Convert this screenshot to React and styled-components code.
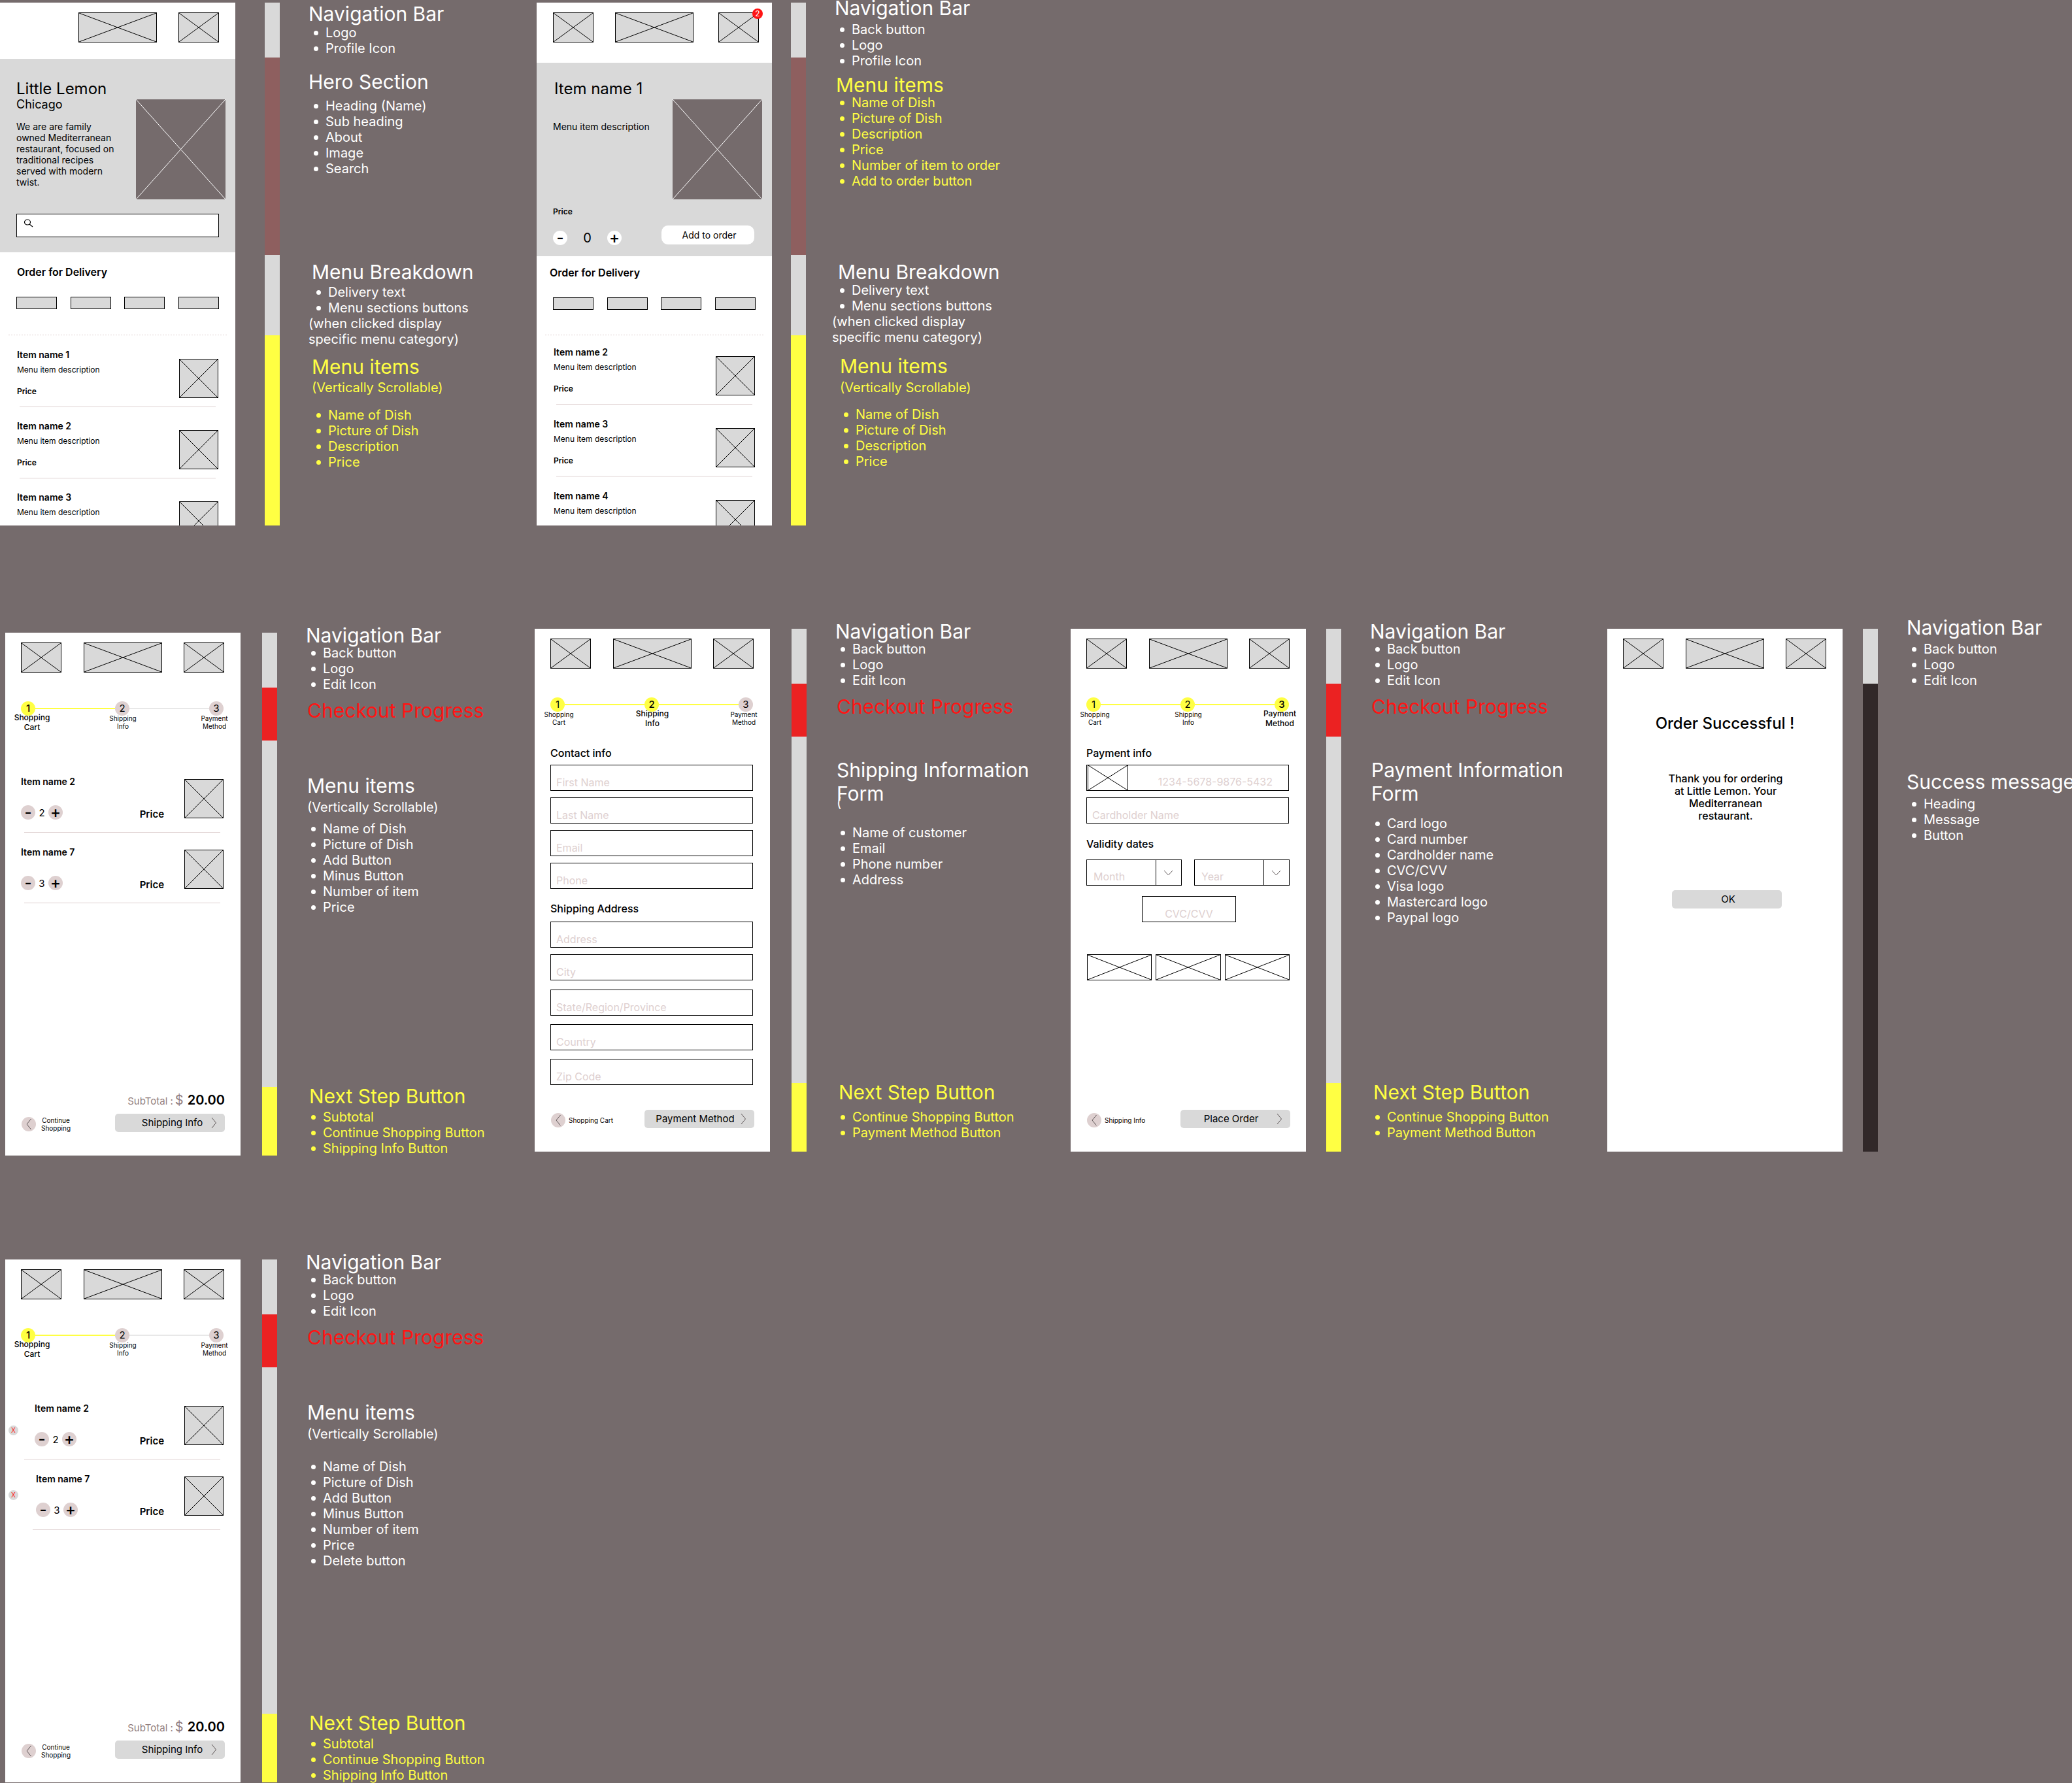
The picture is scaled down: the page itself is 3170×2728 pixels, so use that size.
import React from "react";
import styled, { createGlobalStyle, css } from "styled-components";

const color = {
  board: "#756b6c",
  paper: "#ffffff",
  grey: "#d9d9d9",
  ink: "#000000",
  blush: "#ded0d0",
  mauve: "#937f81",
  maroon: "#8e5f5f",
  yellow: "#ffff43",
  red: "#eb2222",
  alert: "#ff1414",
  dark: "#312829",
  track: "#e8e8e8",
};

const GlobalStyle = createGlobalStyle`
  *, *::before, *::after { box-sizing: border-box; }
  body {
    margin: 0;
    background: ${color.board};
    color: ${color.ink};
    font-family: Inter, "Liberation Sans", sans-serif;
    font-optical-sizing: none;
  }
  h1, h2, h3, p, ul, ol { margin: 0; padding: 0; font-weight: 400; }
  button, input, select { font: inherit; color: inherit; margin: 0; border-radius: 0; }
  button { cursor: pointer; }
  a { color: inherit; text-decoration: none; }
`;

/* ---------- board ---------- */

const Board = styled.main`
  display: flex;
  flex-direction: column;
  gap: 138px;
  overflow: hidden;
`;

const Row = styled.div`
  display: grid;
  grid-template-columns: ${(p) => p.$columns};
`;

const Artboard = styled.section`
  display: flex;
  align-items: flex-start;
  min-width: 0;
  padding-left: ${(p) => p.$inset || 0}px;
`;

const Screen = styled.div`
  display: flex;
  flex-direction: column;
  flex: none;
  width: 360px;
  height: 800px;
  margin-top: ${(p) => p.$top}px;
  margin-right: ${(p) => p.$gap}px;
  background: ${color.paper};
  overflow: hidden;
`;

const Strip = styled.div`
  display: flex;
  flex-direction: column;
  flex: none;
  width: 23px;
  height: 800px;
  margin-top: ${(p) => p.$top}px;
  margin-right: 40px;
`;

const Segment = styled.div`
  flex: ${(p) => p.$size} 0 0;
  background: ${(p) => p.$color};
`;

/* ---------- annotations ---------- */

const Notes = styled.div`
  display: flex;
  flex-direction: column;
  flex: none;
  width: 320px;
  color: ${color.paper};
`;

const NoteSection = styled.section`
  display: flex;
  flex-direction: column;
  margin-top: ${(p) => p.$before}px;
  color: ${(p) => p.$color};
`;

const NoteTitle = styled.h2`
  margin-left: ${(p) => p.$indent}px;
  font-size: 30px;
  line-height: 36px;
`;

const NoteText = styled.p`
  max-width: 260px;
  margin-top: ${(p) => p.$gap || 0}px;
  margin-left: ${(p) => p.$indent}px;
  font-size: 20px;
  line-height: 24px;
`;

const NoteList = styled.ul`
  margin-top: ${(p) => p.$gap}px;
  margin-left: ${(p) => p.$inset || 0}px;
  padding-left: 12px;
  font-size: 20px;
  line-height: 24px;
  list-style: none;
  white-space: nowrap;
`;

const NoteItem = styled.li`
  display: flex;
  align-items: center;

  &::before {
    content: "";
    width: 7px;
    height: 7px;
    margin-right: 11px;
    border-radius: 50%;
    background: currentColor;
  }
`;

/* ---------- shared wireframe parts ---------- */

const CrossBox = styled.div`
  flex: none;
  width: ${(p) => p.$width};
  height: ${(p) => p.$height}px;
  border: ${(p) => (p.$plain ? "0" : `1px solid ${color.ink}`)};
  background: ${(p) => p.$fill};

  svg {
    display: block;
    width: 100%;
    height: 100%;
    overflow: visible;
  }
`;

function Cross({ width = "60px", height = 60, fill = color.grey, stroke = color.ink, plain, label }) {
  return (
    <CrossBox $width={width} $height={height} $fill={fill} $plain={plain} role="img" aria-label={label}>
      <svg viewBox="0 0 100 100" preserveAspectRatio="none" stroke={stroke} strokeWidth="1">
        <path d="M0 0 100 100M100 0 0 100" vectorEffect="non-scaling-stroke" />
      </svg>
    </CrossBox>
  );
}

const TopBar = styled.header`
  display: grid;
  grid-template-columns: ${(p) => (p.$wide ? "95px 158px 62px" : "96px 153px 62px")};
  flex: none;
  height: ${(p) => p.$height}px;
  padding-top: 15px;
  padding-left: ${(p) => (p.$wide ? 25 : 24)}px;
`;

const BadgeAnchor = styled.div`
  position: relative;
`;

const Badge = styled.span`
  position: absolute;
  top: -6px;
  right: -6px;
  width: 16px;
  height: 16px;
  border-radius: 50%;
  background: ${color.alert};
  color: ${color.paper};
  font-size: 12px;
  line-height: 16px;
  text-align: center;
`;

function Bar({ height = 90, back = true, wide, badge }) {
  return (
    <TopBar $height={height} $wide={wide}>
      {back ? <Cross width="62px" height={46} label="Back" /> : <span />}
      <Cross width="120px" height={46} label="Logo" />
      <BadgeAnchor>
        <Cross width="62px" height={46} label="Profile" />
        {badge && <Badge>{badge}</Badge>}
      </BadgeAnchor>
    </TopBar>
  );
}

/* ---------- hero ---------- */

const Hero = styled.section`
  flex: none;
  height: 296px;
  padding: ${(p) => p.$top}px 15px 0 25px;
  background: ${color.grey};
`;

const HeroGrid = styled.div`
  display: grid;
  grid-template-columns: 183px 137px;
  height: 183px;
`;

const HeroPicture = styled.div`
  padding-top: 30px;
`;

const HeroTitle = styled.h1`
  margin-left: ${(p) => p.$shift || 0}px;
  font-size: 24px;
  line-height: 28px;
`;

const HeroSub = styled.h2`
  font-size: 18px;
  line-height: 20px;
`;

const HeroText = styled.p`
  max-width: 160px;
  margin-top: ${(p) => p.$gap}px;
  font-size: 14px;
  line-height: 17px;
`;

const SearchBox = styled.div`
  position: relative;
  width: 310px;
  margin-top: 22px;

  svg {
    position: absolute;
    top: 8px;
    left: 11px;
  }
`;

const SearchInput = styled.input`
  display: block;
  width: 100%;
  height: 36px;
  padding: 0 12px 0 34px;
  border: 1px solid ${color.ink};
  background: ${color.paper};
  font-size: 14px;
`;

const OrderRow = styled.div`
  display: flex;
  align-items: flex-end;
  justify-content: space-between;
  padding-right: 12px;
  margin-top: 14px;
`;

const AddButton = styled.button`
  width: 142px;
  height: 29px;
  padding: 0 0 0 4px;
  border: 0;
  border-radius: 10px;
  background: ${color.paper};
  font-size: 14px;
  line-height: 17px;
`;

const Price = styled.p`
  font-size: ${(p) => (p.$large ? 15 : 12)}px;
  line-height: ${(p) => (p.$large ? 18 : 15)}px;
  font-weight: 600;
`;

const HeroPrice = styled(Price)`
  margin-top: 11px;
`;

const Counter = styled.div`
  display: grid;
  grid-template-columns: 22px ${(p) => p.$middle}px 22px;
  align-items: center;
  height: 22px;
  font-size: ${(p) => p.$size}px;
  text-align: center;
`;

const RoundButton = styled.button`
  width: 22px;
  height: 22px;
  padding: 0;
  border: 0;
  border-radius: 50%;
  background: ${(p) => p.$fill};
  font-size: 24px;
  line-height: 22px;
  font-weight: 500;
`;

function Quantity({ value, middle = 20, size = 15, fill = color.blush }) {
  return (
    <Counter $middle={middle} $size={size}>
      <RoundButton type="button" $fill={fill} aria-label="Remove one">-</RoundButton>
      <span>{value}</span>
      <RoundButton type="button" $fill={fill} aria-label="Add one">+</RoundButton>
    </Counter>
  );
}

/* ---------- menu ---------- */

const MenuHead = styled.section`
  flex: none;
  padding: ${(p) => p.$top}px 25px ${(p) => p.$bottom}px;
`;

const MenuTitle = styled.h2`
  margin-left: ${(p) => p.$shift || 0}px;
  font-size: 16px;
  line-height: 19px;
  font-weight: 600;
`;

const Chips = styled.div`
  display: flex;
  justify-content: space-between;
  margin-top: 28px;
`;

const Chip = styled.button`
  width: 62px;
  height: 19px;
  padding: 0;
  border: 1px solid ${color.ink};
  background: ${color.grey};
`;

const DottedRule = styled.div`
  flex: none;
  height: 1px;
  margin: 0 13px;
  background: repeating-linear-gradient(90deg, ${color.blush} 0 2px, transparent 2px 4px);
`;

const MenuList = styled.ul`
  display: flex;
  flex-direction: column;
  gap: ${(p) => p.$gap}px;
  margin-top: ${(p) => p.$top}px;
  list-style: none;
`;

const MenuItem = styled.li`
  flex: none;
  height: 106px;
  padding: 17px 26px 0;
`;

const MenuGrid = styled.div`
  display: flex;
  justify-content: space-between;
  height: 88px;
`;

const MenuPicture = styled.div`
  padding-top: 15px;
`;

const ItemName = styled.h3`
  font-size: 14px;
  line-height: 17px;
  font-weight: 600;
`;

const ItemText = styled.p`
  margin: 7px 0 18px;
  font-size: 12px;
  line-height: 15px;
`;

const Rule = styled.div`
  height: 1px;
  margin: 0 ${(p) => p.$right}px 0 ${(p) => p.$left}px;
  background: ${color.blush};
`;

function Menu({ names, gap, top }) {
  const last = names.length - 1;
  return (
    <MenuList $gap={gap} $top={top}>
      {names.map((name, i) => (
        <MenuItem key={name}>
          <MenuGrid>
            <div>
              <ItemName>{name}</ItemName>
              <ItemText>Menu item description</ItemText>
              {i < last && <Price>Price</Price>}
            </div>
            <MenuPicture>
              <Cross label={name} />
            </MenuPicture>
          </MenuGrid>
          {i < last && <Rule $left={4} $right={4} />}
        </MenuItem>
      ))}
    </MenuList>
  );
}

function MenuHeader({ top, bottom, shift }) {
  return (
    <MenuHead $top={top} $bottom={bottom}>
      <MenuTitle $shift={shift}>Order for Delivery</MenuTitle>
      <Chips>
        {[1, 2, 3, 4].map((n) => (
          <Chip key={n} type="button" aria-label={`Menu section ${n}`} />
        ))}
      </Chips>
    </MenuHead>
  );
}

/* ---------- checkout progress ---------- */

const Steps = styled.ol`
  display: flex;
  flex: none;
  height: 48px;
  padding: 0 26px 0 24px;
  margin-top: 15px;
  list-style: none;
`;

const Step = styled.li`
  display: flex;
  flex-direction: column;
  align-items: center;
  flex: none;
  width: 22px;
`;

const StepMark = styled.span`
  flex: none;
  width: 22px;
  height: 22px;
  border-radius: 50%;
  background: ${(p) => (p.$done ? color.yellow : color.blush)};
  font-size: 15px;
  line-height: 22px;
  font-weight: ${(p) => (p.$current ? 500 : 400)};
  text-align: center;
`;

const StepLabel = styled.span`
  z-index: 1;
  margin-top: -2px;
  padding-left: ${(p) => p.$left}px;
  padding-right: ${(p) => p.$right}px;
  font-size: 10px;
  line-height: 12px;
  text-align: center;
  white-space: pre;

  ${(p) =>
    p.$current &&
    css`
      margin-top: -5px;
      font-size: 12px;
      line-height: 15px;
      font-weight: 500;
    `}
`;

const StepLine = styled.li`
  flex: 1;
  height: 2px;
  margin-top: 10px;
  background: ${(p) => (p.$done ? color.yellow : color.track)};
`;

const stepNames = ["Shopping\nCart", "Shipping\nInfo", "Payment\nMethod"];

function Progress({ current }) {
  return (
    <Steps>
      {stepNames.map((name, i) => (
        <React.Fragment key={name}>
          {i > 0 && <StepLine $done={i <= current} aria-hidden="true" />}
          <Step>
            <StepMark $done={i < current} $current={i === current - 1}>{i + 1}</StepMark>
            <StepLabel
              $current={i === current - 1}
              $left={i === 0 ? (current === 1 ? 12 : 4) : 2}
              $right={i === 2 ? 8 : 0}
            >
              {name}
            </StepLabel>
          </Step>
        </React.Fragment>
      ))}
    </Steps>
  );
}

/* ---------- cart ---------- */

const CartList = styled.ul`
  display: flex;
  flex-direction: column;
  gap: 11px;
  margin-top: 56px;
  list-style: none;
`;

const CartItem = styled.li`
  flex: none;
  height: 97px;
  padding-top: 10px;
`;

const CartGrid = styled.div`
  display: grid;
  grid-template-columns: ${(p) => p.$lead}px 1fr 60px;
  height: 86px;
  padding-right: 26px;
`;

const CartInfo = styled.div`
  display: grid;
  grid-template-rows: 45px 23px;
  grid-template-columns: auto 1fr;
`;

const CartName = styled(ItemName)`
  grid-column: 1 / -1;
`;

const CartPrice = styled(Price)`
  padding: 5px 31px 0 0;
  text-align: right;
`;

const CartPicture = styled.div`
  padding-top: 5px;
`;

const RemoveSlot = styled.div`
  padding: ${(p) => p.$top}px 0 0 5px;
`;

const RemoveButton = styled.button`
  display: block;
  width: 15px;
  height: 15px;
  padding: 0;
  border: 0;
  border-radius: 50%;
  background: ${color.grey};
  color: ${color.alert};
  font-size: 10px;
  line-height: 15px;
`;

function Cart({ items, editing }) {
  return (
    <CartList>
      {items.map((item) => (
        <CartItem key={item.name}>
          <CartGrid $lead={item.lead}>
            <RemoveSlot $top={item.removeTop || 0}>
              {editing && (
                <RemoveButton type="button" aria-label={`Delete ${item.name}`}>X</RemoveButton>
              )}
            </RemoveSlot>
            <CartInfo>
              <CartName>{item.name}</CartName>
              <Quantity value={item.count} />
              <CartPrice $large>Price</CartPrice>
            </CartInfo>
            <CartPicture>
              <Cross label={item.name} />
            </CartPicture>
          </CartGrid>
          <Rule $left={item.rule} $right={31} />
        </CartItem>
      ))}
    </CartList>
  );
}

const Footer = styled.footer`
  display: flex;
  flex-direction: column;
  gap: 7px;
  margin-top: auto;
  padding: 0 24px 36px 25px;
`;

const Total = styled.p`
  display: flex;
  align-items: baseline;
  justify-content: flex-end;
  gap: 3px;
  color: ${color.mauve};
  font-size: 15px;
  line-height: 24px;

  span { font-size: 20px; }
  strong {
    margin-left: 3px;
    color: ${color.ink};
    font-size: 20px;
    font-weight: 600;
  }
`;

const FooterRow = styled.div`
  display: flex;
  align-items: flex-end;
  justify-content: space-between;
`;

const BackLink = styled.a`
  display: flex;
  align-items: center;
  gap: ${(p) => p.$gap}px;
  height: 24px;
  font-size: 10px;
  line-height: 12px;
  text-align: center;
  white-space: pre;
`;

const BackMark = styled.span`
  display: flex;
  align-items: center;
  justify-content: center;
  width: 22px;
  height: 22px;
  border-radius: 50%;
  background: ${color.blush};
`;

const NextButton = styled.button`
  display: flex;
  align-items: center;
  width: 168px;
  height: 28px;
  padding: 0 12px 0 ${(p) => p.$lead}px;
  border: 0;
  border-radius: 5px;
  background: ${color.grey};
  font-size: 15px;
  line-height: 18px;

  span { flex: 1; text-align: center; }
`;

function Chevron({ direction }) {
  const paths = { left: "M7.5 1 1 9l6.500 8", right: "M1 1l6.500 8L1 17", down: "M1 1l6.500 7L14 1" };
  const down = direction === "down";
  return (
    <svg width={down ? 15 : 9} height={down ? 9 : 18} fill="none" stroke="#5f5758" strokeWidth="1" aria-hidden="true">
      <path d={paths[direction]} />
    </svg>
  );
}

function CheckoutFooter({ back, backGap = 5, next, lead = 8, total }) {
  return (
    <Footer>
      {total && (
        <Total>
          SubTotal : <span>$</span> <strong>{total}</strong>
        </Total>
      )}
      <FooterRow>
        <BackLink href="#back" $gap={backGap}>
          <BackMark><Chevron direction="left" /></BackMark>
          {back}
        </BackLink>
        <NextButton type="button" $lead={lead}>
          <span>{next}</span>
          <Chevron direction="right" />
        </NextButton>
      </FooterRow>
    </Footer>
  );
}

/* ---------- forms ---------- */

const Form = styled.form`
  display: flex;
  flex-direction: column;
  flex: none;
  width: 310px;
  margin: 27px 0 0 24px;
`;

const FormTitle = styled.h2`
  margin-top: ${(p) => p.$before || 0}px;
  margin-bottom: ${(p) => p.$after}px;
  font-size: 16px;
  line-height: 20px;
  font-weight: 500;
`;

const FieldGroup = styled.div`
  display: flex;
  flex-direction: column;
  gap: ${(p) => p.$gap}px;
  margin-top: ${(p) => p.$before || 0}px;
`;

const fieldText = css`
  font-size: 16px;
  line-height: 19px;
  border: 1px solid ${color.ink};
  background: ${color.paper};
  height: 40px;
`;

const Field = styled.input`
  ${fieldText}
  display: block;
  width: 100%;
  padding: 16px 8px 3px;
  text-align: ${(p) => p.$align || "left"};

  &::placeholder { color: ${color.blush}; opacity: 1; }
`;

const CardRow = styled.div`
  display: flex;
  ${fieldText}
  padding-left: 1px;
`;

const CardLogo = styled.div`
  flex: none;
  margin: -1px 0;
`;

const CardInput = styled.input`
  flex: 1;
  min-width: 0;
  padding: 16px 24px 3px;
  border: 0;
  background: none;
  font-size: 16px;
  line-height: 19px;
  text-align: right;

  &::placeholder { color: ${color.blush}; opacity: 1; }
`;

const Pickers = styled.div`
  display: grid;
  grid-template-columns: 1fr 1fr;
  gap: 19px;
  margin-right: -1px;
`;

const Picker = styled.div`
  position: relative;

  &::after {
    content: "";
    position: absolute;
    top: 0;
    right: 39px;
    width: 1px;
    height: 100%;
    background: ${color.ink};
  }

  svg {
    position: absolute;
    top: 16px;
    right: 13px;
    pointer-events: none;
  }
`;

const PickerSelect = styled.select`
  ${fieldText}
  appearance: none;
  display: block;
  width: 100%;
  padding: 16px 40px 3px 10px;
  color: ${color.blush};
`;

const CodeSlot = styled.div`
  width: 144px;
  margin: 16px 0 49px 85px;
`;

const Logos = styled.div`
  display: grid;
  grid-template-columns: repeat(3, 1fr);
  gap: 6px;
  margin: 0 -1px 0 1px;
`;

function Fields({ names, gap, before }) {
  return (
    <FieldGroup $gap={gap} $before={before}>
      {names.map((name) => (
        <Field key={name} type="text" placeholder={name} aria-label={name} />
      ))}
    </FieldGroup>
  );
}

function DatePicker({ name }) {
  return (
    <Picker>
      <PickerSelect aria-label={name} defaultValue="">
        <option value="">{name}</option>
      </PickerSelect>
      <Chevron direction="down" />
    </Picker>
  );
}

/* ---------- success ---------- */

const Success = styled.section`
  display: flex;
  flex-direction: column;
  align-items: center;
  text-align: center;
`;

const SuccessTitle = styled.h1`
  margin-top: 40px;
  font-size: 24px;
  line-height: 29px;
  font-weight: 500;
`;

const SuccessText = styled.p`
  width: 180px;
  margin: 61px 0 0 2px;
  font-size: 16px;
  line-height: 19px;
  font-weight: 500;
`;

const OkButton = styled.button`
  width: 168px;
  height: 28px;
  margin: 104px 0 0 6px;
  padding: 0 0 0 4px;
  border: 0;
  border-radius: 5px;
  background: ${color.grey};
  font-size: 15px;
  line-height: 18px;
`;

/* ---------- note content ---------- */

const { paper, yellow, alert } = color;
const dish = ["Name of Dish", "Picture of Dish", "Description", "Price"];
const editNav = ["Back button", "Logo", "Edit Icon"];
const checkout = { title: "Checkout Progress", tint: alert, indent: 6, before: 10 };
const aside = "(when clicked display specific menu category)";
const scrollable = "(Vertically Scrollable)";

const homeNotes = [
  { title: "Navigation Bar", tint: paper, indent: 4, before: 3, gap: -1, items: ["Logo", "Profile Icon"] },
  { title: "Hero Section", tint: paper, indent: 4, before: 21, gap: 7, items: ["Heading (Name)", "Sub heading", "About", "Image", "Search"] },
  { title: "Menu Breakdown", tint: paper, indent: 9, before: 128, gap: 1, inset: 4, items: ["Delivery text", "Menu sections buttons"], after: aside, afterIndent: 4 },
  { title: "Menu items", tint: yellow, indent: 9, before: 12, sub: scrollable, subGap: 2, gap: 18, inset: 4, items: dish },
];

const itemNotes = [
  { title: "Navigation Bar", tint: paper, indent: 4, before: -6, gap: 3, items: ["Back button", "Logo", "Profile Icon"] },
  { title: "Menu items", tint: yellow, indent: 6, before: 7, gap: -3, items: [...dish, "Number of item to order", "Add to order button"] },
  { title: "Menu Breakdown", tint: paper, indent: 9, before: 109, gap: -2, items: ["Delivery text", "Menu sections buttons"], after: aside, afterIndent: 0 },
  { title: "Menu items", tint: yellow, indent: 12, before: 14, sub: scrollable, subGap: 3, gap: 17, inset: 6, items: dish },
];

const cartItems = ["Name of Dish", "Picture of Dish", "Add Button", "Minus Button", "Number of item", "Price"];
const cartNext = ["Subtotal", "Continue Shopping Button", "Shipping Info Button"];
const formNext = ["Continue Shopping Button", "Payment Method Button"];

const cartNotes = [
  { title: "Navigation Bar", tint: paper, indent: 4, before: 12, gap: -3, items: editNav },
  checkout,
  { title: "Menu items", tint: paper, indent: 6, before: 79, sub: scrollable, subGap: 3, gap: 9, items: cartItems },
  { title: "Next Step Button", tint: yellow, indent: 9, before: 259, gap: 2, items: cartNext },
];

const shippingNotes = [
  { title: "Navigation Bar", tint: paper, indent: 4, before: 6, gap: -3, items: editNav },
  checkout,
  { title: "Shipping Information Form", tint: paper, indent: 6, before: 61, sub: "(", subGap: -16, gap: 22, items: ["Name of customer", "Email", "Phone number", "Address"] },
  { title: "Next Step Button", tint: yellow, indent: 9, before: 295, gap: 8, items: formNext },
];

const paymentNotes = [
  { title: "Navigation Bar", tint: paper, indent: 4, before: 6, gap: -3, items: editNav },
  checkout,
  { title: "Payment Information Form", tint: paper, indent: 6, before: 61, gap: 16, items: ["Card logo", "Card number", "Cardholder name", "CVC/CVV", "Visa logo", "Mastercard logo", "Paypal logo"] },
  { title: "Next Step Button", tint: yellow, indent: 9, before: 237, gap: 8, items: formNext },
];

const successNotes = [
  { title: "Navigation Bar", tint: paper, indent: 4, before: 0, gap: 3, items: editNav },
  { title: "Success message", tint: paper, indent: 4, before: 125, gap: 4, items: ["Heading", "Message", "Button"] },
];

const editNotes = [
  { title: "Navigation Bar", tint: paper, indent: 4, before: 6, gap: -3, items: editNav },
  checkout,
  { title: "Menu items", tint: paper, indent: 6, before: 79, sub: scrollable, subGap: 3, gap: 26, items: [...cartItems, "Delete button"] },
  { title: "Next Step Button", tint: yellow, indent: 9, before: 218, gap: 2, items: cartNext },
];

const browseStrip = [[84, color.grey], [302, color.maroon], [123, color.grey], [291, color.yellow]];
const checkoutStrip = [[84, color.grey], [81, color.red], [530, color.grey], [105, color.yellow]];
const successStrip = [[84, color.grey], [716, color.dark]];

function Frame({ inset, top, gap, strip, notes, children }) {
  return (
    <Artboard $inset={inset}>
      <Screen $top={top} $gap={gap}>{children}</Screen>
      <Strip $top={top}>
        {strip.map(([size, fill], i) => (
          <Segment key={i} $size={size} $color={fill} />
        ))}
      </Strip>
      <Notes>
        {notes.map((n, i) => (
          <NoteSection key={i} $before={n.before} $color={n.tint}>
            <NoteTitle $indent={n.indent}>{n.title}</NoteTitle>
            {n.sub && <NoteText $gap={n.subGap} $indent={n.indent}>{n.sub}</NoteText>}
            {n.items && (
              <NoteList $gap={n.gap} $inset={n.inset}>
                {n.items.map((item) => (
                  <NoteItem key={item}>{item}</NoteItem>
                ))}
              </NoteList>
            )}
            {n.after && <NoteText $indent={n.afterIndent}>{n.after}</NoteText>}
          </NoteSection>
        ))}
      </Notes>
    </Artboard>
  );
}

/* ---------- page ---------- */

export default function App() {
  return (
    <>
      <GlobalStyle />
      <Board>
        <Row $columns="821fr 820fr 818fr 711fr">
          <Frame top={4} gap={45} strip={browseStrip} notes={homeNotes}>
            <Bar height={86} back={false} />
            <Hero $top={32}>
              <HeroGrid>
                <div>
                  <HeroTitle>Little Lemon</HeroTitle>
                  <HeroSub>Chicago</HeroSub>
                  <HeroText $gap={15}>
                    We are are family owned Mediterranean restaurant, focused on traditional recipes served with
                    modern twist.
                  </HeroText>
                </div>
                <HeroPicture>
                  <Cross width="137px" height={153} fill={color.board} stroke={color.paper} plain label="Restaurant" />
                </HeroPicture>
              </HeroGrid>
              <SearchBox>
                <SearchInput type="search" aria-label="Search" />
                <svg width="16" height="14" fill="none" stroke="#000" strokeWidth="1.2" aria-hidden="true">
                  <ellipse cx="6" cy="5" rx="4.500" ry="4" />
                  <path d="M9 8 14 12" />
                </svg>
              </SearchBox>
            </Hero>
            <MenuHeader top={21} bottom={39} shift={1} />
            <DottedRule />
            <Menu names={["Item name 1", "Item name 2", "Item name 3"]} gap={3} top={4} />
          </Frame>

          <Frame top={4} gap={29} strip={browseStrip} notes={itemNotes}>
            <Bar height={92} wide badge="2" />
            <Hero $top={26}>
              <HeroGrid>
                <div>
                  <HeroTitle $shift={2}>Item name 1</HeroTitle>
                  <HeroText $gap={35}>Menu item description</HeroText>
                </div>
                <HeroPicture>
                  <Cross width="137px" height={153} fill={color.board} stroke={color.paper} plain label="Item name 1" />
                </HeroPicture>
              </HeroGrid>
              <HeroPrice>Price</HeroPrice>
              <OrderRow>
                <Quantity value={0} middle={61} size={20} fill={color.paper} />
                <AddButton type="button">Add to order</AddButton>
              </OrderRow>
            </Hero>
            <MenuHeader top={16} bottom={38} shift={-5} />
            <DottedRule />
            <Menu names={["Item name 2", "Item name 3", "Item name 4"]} gap={4} top={0} />
          </Frame>
        </Row>

        <Row $columns="818fr 820fr 821fr 711fr">
          <Frame inset={8} top={26} gap={33} strip={checkoutStrip} notes={cartNotes}>
            <Bar />
            <Progress current={1} />
            <Cart
              items={[
                { name: "Item name 2", count: 2, lead: 24, rule: 29 },
                { name: "Item name 7", count: 3, lead: 24, rule: 29 },
              ]}
            />
            <CheckoutFooter total="20.00" back={"Continue\nShopping"} backGap={8} next="Shipping Info" lead={28} />
          </Frame>

          <Frame top={20} gap={33} strip={checkoutStrip} notes={shippingNotes}>
            <Bar />
            <Progress current={2} />
            <Form>
              <FormTitle $after={8}>Contact info</FormTitle>
              <Fields names={["First Name", "Last Name", "Email", "Phone"]} gap={10} />
              <FormTitle $before={20} $after={10}>Shipping Address</FormTitle>
              <Fields names={["Address", "City"]} gap={10} />
              <Fields names={["State/Region/Province", "Country", "Zip Code"]} gap={13} before={14} />
            </Form>
            <CheckoutFooter back="Shopping Cart" next="Payment Method" />
          </Frame>

          <Frame top={20} gap={31} strip={checkoutStrip} notes={paymentNotes}>
            <Bar />
            <Progress current={3} />
            <Form>
              <FormTitle $after={8}>Payment info</FormTitle>
              <FieldGroup $gap={10}>
                <CardRow>
                  <CardLogo>
                    <Cross width="62px" height={40} fill={color.paper} label="Card logo" />
                  </CardLogo>
                  <CardInput type="text" placeholder="1234-5678-9876-5432" aria-label="Card number" />
                </CardRow>
                <Field type="text" placeholder="Cardholder Name" aria-label="Cardholder Name" />
              </FieldGroup>
              <FormTitle $before={21} $after={14}>Validity dates</FormTitle>
              <Pickers>
                <DatePicker name="Month" />
                <DatePicker name="Year" />
              </Pickers>
              <CodeSlot>
                <Field type="text" placeholder="CVC/CVV" aria-label="CVC/CVV" $align="center" />
              </CodeSlot>
              <Logos>
                <Cross width="100%" height={40} fill={color.paper} label="Visa" />
                <Cross width="100%" height={40} fill={color.paper} label="Mastercard" />
                <Cross width="100%" height={40} fill={color.paper} label="Paypal" />
              </Logos>
            </Form>
            <CheckoutFooter back="Shipping Info" next="Place Order" />
          </Frame>

          <Frame top={20} gap={31} strip={successStrip} notes={successNotes}>
            <Bar />
            <Success>
              <SuccessTitle>Order Successful !</SuccessTitle>
              <SuccessText>Thank you for ordering at Little Lemon. Your Mediterranean restaurant.</SuccessText>
              <OkButton type="button">OK</OkButton>
            </Success>
          </Frame>
        </Row>

        <Row $columns="818fr 820fr 821fr 711fr">
          <Frame inset={8} top={20} gap={33} strip={checkoutStrip} notes={editNotes}>
            <Bar />
            <Progress current={1} />
            <Cart
              editing
              items={[
                { name: "Item name 2", count: 2, lead: 45, rule: 29, removeTop: 35 },
                { name: "Item name 7", count: 3, lead: 47, rule: 42, removeTop: 26 },
              ]}
            />
            <CheckoutFooter total="20.00" back={"Continue\nShopping"} backGap={8} next="Shipping Info" lead={28} />
          </Frame>
        </Row>
      </Board>
    </>
  );
}
